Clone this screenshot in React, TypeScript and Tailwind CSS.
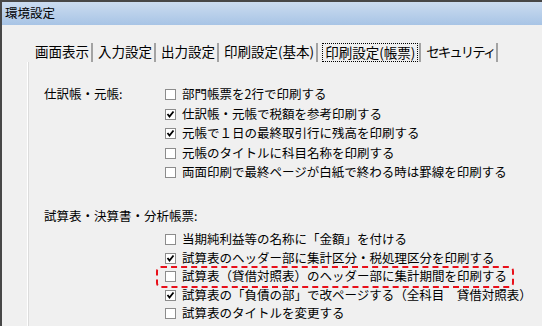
const tabs = ["画面表示", "入力設定", "出力設定", "印刷設定(基本)", "印刷設定(帳票)", "セキュリティ"];

const journal = [
  { label: "部門帳票を2行で印刷する", checked: false },
  { label: "仕訳帳・元帳で税額を参考印刷する", checked: true },
  { label: "元帳で１日の最終取引行に残高を印刷する", checked: true },
  { label: "元帳のタイトルに科目名称を印刷する", checked: false },
  { label: "両面印刷で最終ページが白紙で終わる時は罫線を印刷する", checked: false },
];

const trial = [
  { label: "当期純利益等の名称に「金額」を付ける", checked: false },
  { label: "試算表のヘッダー部に集計区分・税処理区分を印刷する", checked: true },
  { label: "試算表（貸借対照表）のヘッダー部に集計期間を印刷する", checked: false, mark: true },
  { label: "試算表の「負債の部」で改ページする（全科目　貸借対照表）", checked: true },
  { label: "試算表のタイトルを変更する", checked: false },
];

function Box({ checked }: { checked: boolean }) {
  return (
    <span className="w-[11px] h-[11px] shrink-0 bg-white border border-[#8c8c8c] flex items-center justify-center">
      {checked && (
        <svg width="9" height="9" viewBox="0 0 9 9">
          <polyline points="1.5,4 3.5,6.5 7.5,1.5" fill="none" stroke="#000" strokeWidth="1.8" />
        </svg>
      )}
    </span>
  );
}

function Row({ label, checked, mark, h }: { label: string; checked: boolean; mark?: boolean; h: string }) {
  return (
    <div className={`flex items-center ${h}`}>
      <div className="w-[121px] shrink-0" />
      <div className="relative flex items-center gap-[6px]">
        <Box checked={checked} />
        <span className="whitespace-nowrap">{label}</span>
        {mark && (
          <span className="absolute left-[-9px] right-[-7px] top-1/2 -translate-y-1/2 h-[22px] rounded-[5px] border-2 border-dashed border-[#e8101a]" />
        )}
      </div>
    </div>
  );
}

export default function App() {
  return (
    <div
      className="w-[542px] h-[326px] overflow-hidden bg-[#f0f0f0] border-t-2 border-l-2 border-[#474747] flex flex-col text-black"
      style={{ fontFamily: '"Noto Sans CJK JP", "Noto Sans", sans-serif' }}
    >
      <div className="h-[23px] shrink-0 bg-gradient-to-b from-[#cbdcf0] to-[#a8c4e5] flex items-center pl-[3px] text-[12.5px]">
        環境設定
      </div>

      <div className="flex-1 flex flex-col pt-[18px]">
        <div className="flex h-[19px] ml-[28px] text-[13.5px] leading-[17px]">
          {tabs.map((t, i) =>
            i === 4 ? (
              <div key={t} className="flex items-start pl-[4px] pr-[1px] border-r-2 border-[#a3a3a3]">
                <span className="px-[2px] border border-dotted border-black whitespace-nowrap">{t}</span>
              </div>
            ) : (
              <div
                key={t}
                className={`pl-[5px] pr-[2px] border-r-2 border-[#a3a3a3] whitespace-nowrap ${i === 5 ? "tracking-[-2px]" : ""}`}
              >
                {t}
              </div>
            )
          )}
        </div>

        <div className="flex-1 ml-[25px] border-l border-white shadow-[inset_1px_0_0_#dcdcdc] pl-[16px] pt-[23px] text-[12.5px]">
          <div className="relative">
            <div className="absolute left-0 top-0 h-[19.5px] flex items-center">仕訳帳・元帳:</div>
            {journal.map((r) => (
              <Row key={r.label} {...r} h="h-[19.5px]" />
            ))}
          </div>

          <div className="h-[18.5px] mt-[25px] flex items-center">試算表・決算書・分析帳票:</div>
          <div className="mt-[4.5px]">
            {trial.map((r) => (
              <Row key={r.label} {...r} h="h-[18.5px]" />
            ))}
          </div>
        </div>
      </div>
    </div>
  );
}
